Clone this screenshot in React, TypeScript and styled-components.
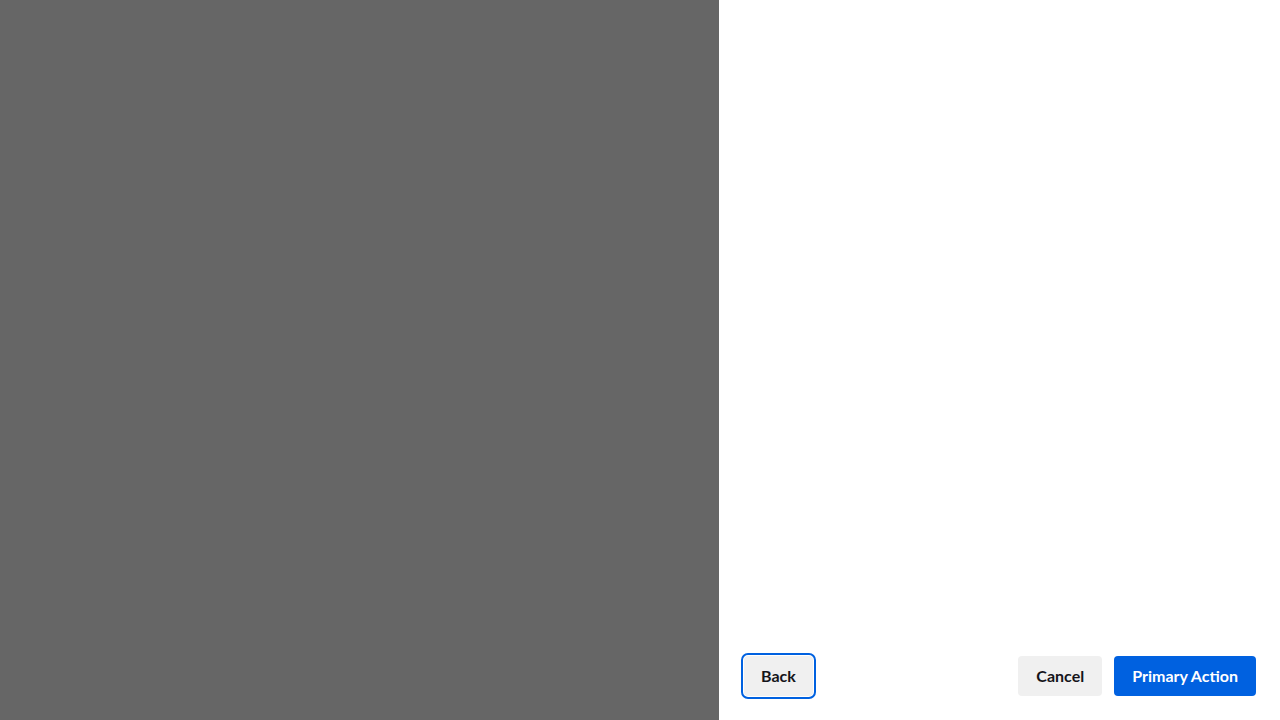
import styled, { createGlobalStyle } from "styled-components"

const GlobalStyle = createGlobalStyle`
    html, body {
        margin: 0;
        padding: 0;
        height: 100%;
    }
    body {
        font-family: Lato, "Noto Sans", "Liberation Sans", sans-serif;
        overflow: hidden;
    }
    #root {
        height: 100%;
    }
`

const Screen = styled.div`
    display: flex;
    width: 100vw;
    height: 100vh;
`

const Backdrop = styled.div`
    flex: 1;
    background-color: #666666;
`

const Panel = styled.aside`
    width: 561px;
    background-color: #ffffff;
    display: flex;
    flex-direction: column;
    justify-content: flex-end;
    padding: 0 24px 24px 25px;
    box-sizing: border-box;
`

const Footer = styled.div`
    display: flex;
    align-items: center;
    justify-content: space-between;
`

const Group = styled.div`
    display: flex;
    gap: 12px;
`

const Button = styled.button<{primary?: boolean, focused?: boolean}>`
    height: 40px;
    padding: 0 ${props => props.focused ? '17px' : '18px'} 1px;
    border: none;
    border-radius: 4px;
    font-family: inherit;
    font-size: 16px;
    font-weight: 700;
    line-height: 1;
    cursor: pointer;
    background-color: ${props => props.primary ? '#0061e0' : '#f0f0f0'};
    color: ${props => props.primary ? '#ffffff' : '#15141a'};
    outline: ${props => props.focused ? '2px solid #0061e0' : 'none'};
    outline-offset: 1px;
`

const App: React.FC = () => {
    return <>
        <GlobalStyle/>
        <Screen>
            <Backdrop/>
            <Panel>
                <Footer>
                    <Button focused>Back</Button>
                    <Group>
                        <Button>Cancel</Button>
                        <Button primary>Primary Action</Button>
                    </Group>
                </Footer>
            </Panel>
        </Screen>
    </>
}

export default App
